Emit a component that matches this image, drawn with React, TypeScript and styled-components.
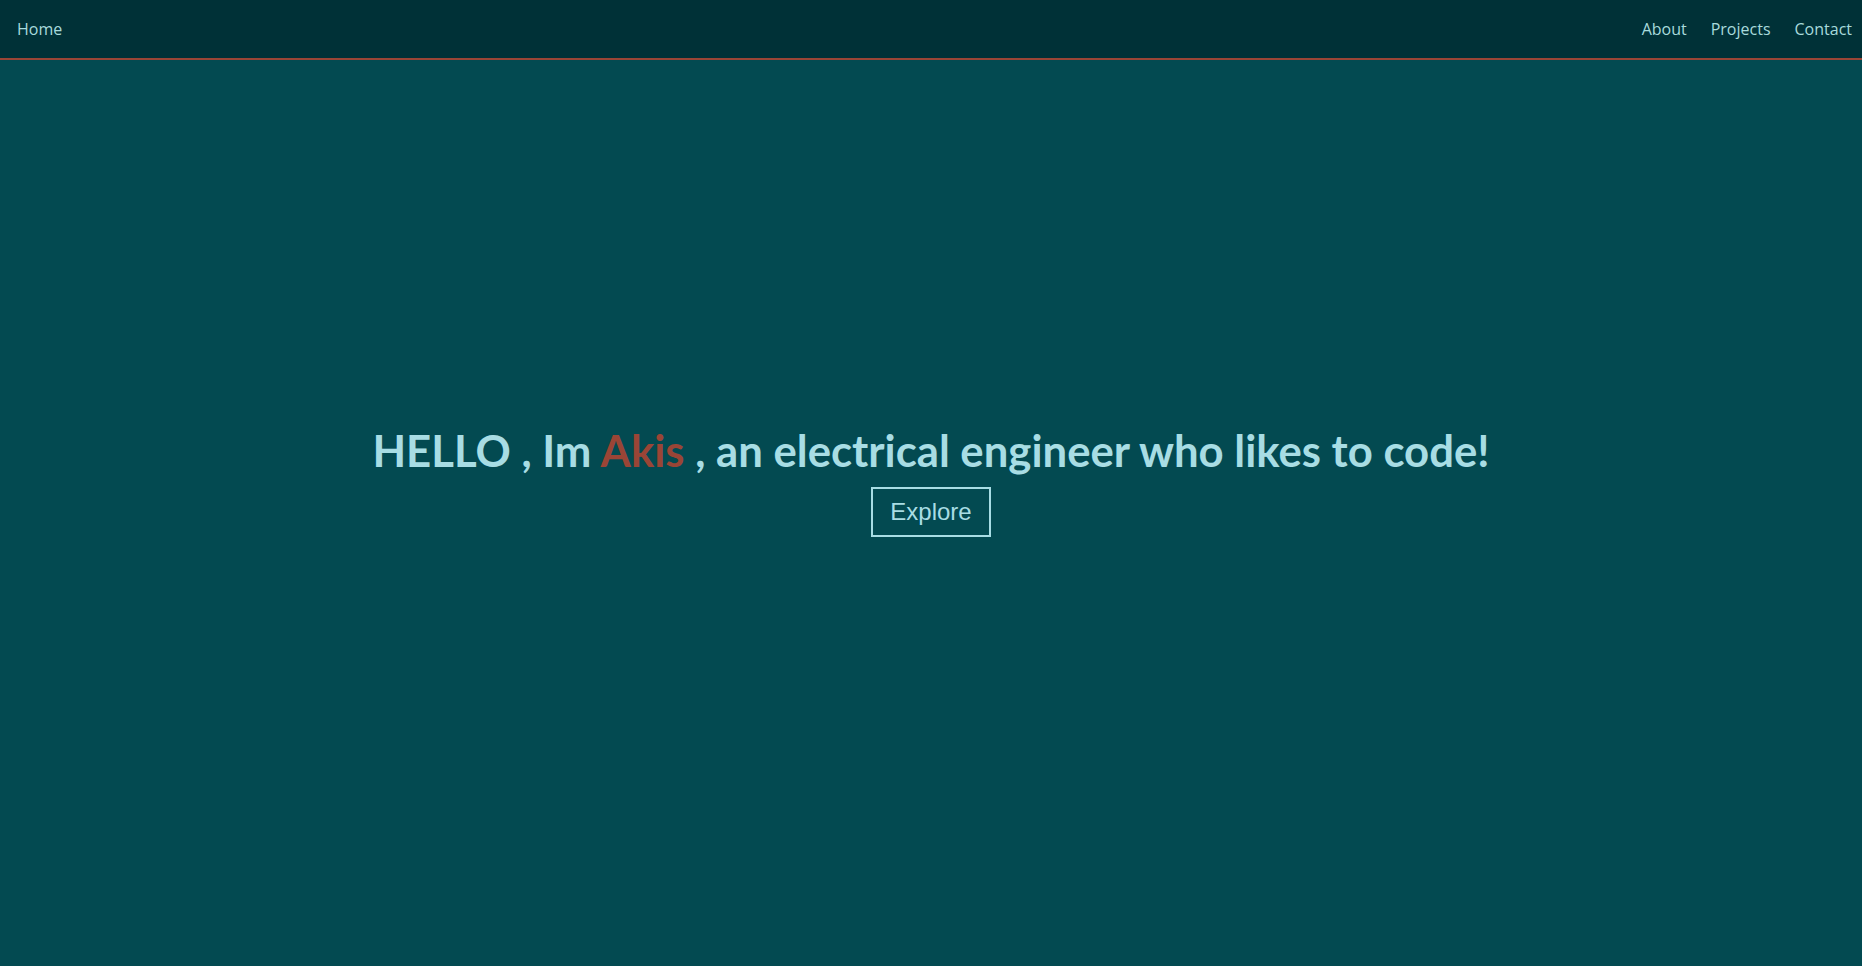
import React from "react";
import styled, { createGlobalStyle } from "styled-components";

const Global = createGlobalStyle`
  html, body { margin: 0; padding: 0; }
  body {
    background: #034a51;
    font-family: "Open Sans", "Liberation Sans", sans-serif;
    overflow: hidden;
  }
`;

const Page = styled.div`
  display: flex;
  flex-direction: column;
  height: 100vh;
  background: #034a51;
`;

const Nav = styled.nav`
  display: flex;
  align-items: center;
  justify-content: space-between;
  height: 58px;
  padding: 0 10px 0 17px;
  background: #003137;
  border-bottom: 2px solid #9a4536;
  flex-shrink: 0;
`;

const NavGroup = styled.div`
  display: flex;
  align-items: center;
  gap: 24px;
`;

const NavLink = styled.a`
  color: #a8dadc;
  font-family: "Open Sans", sans-serif;
  font-size: 16px;
  text-decoration: none;
  cursor: pointer;
`;

const Hero = styled.main`
  flex: 1;
  display: flex;
  flex-direction: column;
  align-items: center;
  justify-content: center;
  padding-bottom: 64px;
  gap: 12px;
`;

const Title = styled.h1`
  margin: 0;
  color: #a8dde4;
  font-family: "Lato", sans-serif;
  font-weight: 700;
  font-size: 43.7px;
  line-height: 1.15;
  white-space: nowrap;
`;

const Accent = styled.span`
  color: #9a4536;
`;

const Button = styled.button`
  background: transparent;
  color: #a8dde4;
  border: 2px solid #a8dde4;
  font-family: "Liberation Sans", Arial, sans-serif;
  font-size: 24px;
  padding: 9px 17px;
  cursor: pointer;
`;

export default function App() {
  return (
    <>
      <Global />
      <Page>
        <Nav>
          <NavLink>Home</NavLink>
          <NavGroup>
            <NavLink>About</NavLink>
            <NavLink>Projects</NavLink>
            <NavLink>Contact</NavLink>
          </NavGroup>
        </Nav>
        <Hero>
          <Title>
            HELLO , Im <Accent>Akis</Accent> , an electrical engineer who likes to code!
          </Title>
          <Button>Explore</Button>
        </Hero>
      </Page>
    </>
  );
}
